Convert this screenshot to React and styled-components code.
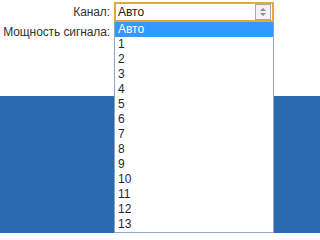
import React from "react";
import styled, { createGlobalStyle } from "styled-components";

const Global = createGlobalStyle`
  html, body { margin: 0; padding: 0; background: #fff; }
  body { font-family: "Liberation Sans", Arial, sans-serif; font-size: 12px; color: #333; }
`;

const Page = styled.div`
  position: relative;
  width: 100%;
  min-width: 277px;
  height: 233px;
  overflow: hidden;
  display: flex;
  flex-direction: column;
`;

const Form = styled.div`
  display: flex;
  flex-direction: column;
  padding-top: 2px;
`;

const Row = styled.div`
  display: grid;
  grid-template-columns: 110px 160px;
  column-gap: 4px;
  align-items: center;
  height: ${(p) => p.$h}px;
`;

const Label = styled.div`
  text-align: right;
  white-space: nowrap;
  color: #333;
  font-size: 12px;
  letter-spacing: -0.1px;
  line-height: 15px;
`;

const SelectWrap = styled.div`
  position: relative;
  height: 20px;
`;

const SelectBox = styled.div`
  box-sizing: border-box;
  height: 20px;
  border: 2px solid #e3a93f;
  background: #fff;
  display: flex;
  align-items: center;
  padding-left: 2px;
  padding-right: 1px;
  color: #222;
`;

const Value = styled.span`
  flex: 1;
  line-height: 15px;
`;

const Arrow = styled.div`
  box-sizing: border-box;
  width: 16px;
  height: 16px;
  border: 1px solid #a9a9a9;
  background: #f2f2f2;
  display: flex;
  align-items: center;
  justify-content: center;
`;

const List = styled.ul`
  position: absolute;
  top: 20px;
  left: 0;
  width: 160px;
  box-sizing: border-box;
  margin: 0;
  padding: 0;
  list-style: none;
  background: #fff;
  border: 1px solid #8ea6c2;
  border-top: none;
  z-index: 2;
`;

const Option = styled.li`
  height: 15px;
  line-height: 15px;
  padding-left: 3px;
  color: ${(p) => (p.$active ? "#fff" : "#1f1f3a")};
  background: ${(p) => (p.$active ? "#3399ff" : "transparent")};
`;

const Band = styled.div`
  margin-top: 54px;
  flex: 1;
  background: repeating-linear-gradient(
    to bottom,
    #2c6cb0 0px,
    #2c6cb0 1px,
    #2967ab 1px,
    #2967ab 2px
  );
`;

const options = ["Авто", "1", "2", "3", "4", "5", "6", "7", "8", "9", "10", "11", "12", "13"];

export default function App() {
  return (
    <>
      <Global />
      <Page>
        <Form>
          <Row $h={20}>
            <Label>Канал:</Label>
            <SelectWrap>
              <SelectBox>
                <Value>Авто</Value>
                <Arrow>
                  <svg width="8" height="10" viewBox="0 0 8 10">
                    <path d="M4 1 L7 4 L1 4 Z" fill="#8a8a8a" />
                    <path d="M4 9 L7 6 L1 6 Z" fill="#8a8a8a" />
                  </svg>
                </Arrow>
              </SelectBox>
              <List>
                {options.map((o, i) => (
                  <Option key={o} $active={i === 0}>
                    {o}
                  </Option>
                ))}
              </List>
            </SelectWrap>
          </Row>
          <Row $h={20}>
            <Label>Мощность сигнала:</Label>
          </Row>
        </Form>
        <Band />
      </Page>
    </>
  );
}
